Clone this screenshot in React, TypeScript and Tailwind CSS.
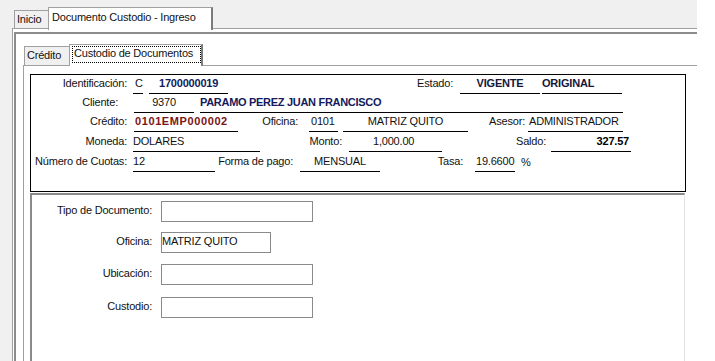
import React from "react";

type P = { className?: string; children?: React.ReactNode };

const L = ({ className = "", children }: P) => (
  <div className={`h-full flex items-end justify-end pb-[4px] pr-[2px] whitespace-nowrap shrink-0 ${className}`}>
    {children}
  </div>
);

const F = ({ className = "", children }: P) => (
  <div className={`h-full flex items-end pb-[3px] border-b border-black whitespace-nowrap shrink-0 ${className}`}>
    {children}
  </div>
);

const navy = "font-bold text-[#141a5c]";

export default function App() {
  return (
    <div className="w-[715px] h-[361px] bg-white overflow-hidden font-['Liberation_Sans',Arial,sans-serif] text-[11px] leading-[13px] tracking-[-0.2px] text-[#111]">
      <div className="w-[697px] h-full bg-[#f0f0f0] flex flex-col">
        {/* top tabs */}
        <div className="h-[28px] flex items-end pl-[14px] relative z-10 shrink-0">
          <div className="h-[18px] w-[34px] border-t border-l border-[#a0a0a0] pl-[2px] pt-[2px] bg-[#f0f0f0]">Inicio</div>
          <div className="h-[23px] w-[165px] -mb-[2px] bg-white border-t border-l border-r-2 border-[#a0a0a0] border-r-[#7c7c7c] pl-[3px] pt-[3px] whitespace-nowrap">
            Documento Custodio - Ingreso
          </div>
        </div>
        {/* outer tab page */}
        <div className="flex-1 ml-[12px] border-t border-l border-[#a0a0a0] bg-white pt-[3px] pl-[1px] flex flex-col">
          <div className="flex-1 border-t-2 border-l-2 border-[#8c8c8c] flex flex-col">
            <div className="mt-[10px] ml-[7px] flex-1 flex flex-col">
              {/* inner tabs */}
              <div className="h-[21px] flex items-end pl-[1px] relative z-10 shrink-0">
                <div className="h-[19px] w-[45px] border-t border-l border-[#a0a0a0] bg-[#f0f0f0] pl-[2px] pt-[2px]">Crédito</div>
                <div className="h-[22px] w-[134px] -mb-[1px] bg-white border-t border-l border-r-2 border-[#a0a0a0] border-r-[#7c7c7c] pl-[2px] pt-[1px]">
                  <div className="w-[129px] h-[17px] border border-dotted border-black pl-[1px] whitespace-nowrap">Custodio de Documentos</div>
                </div>
              </div>
              {/* inner tab page */}
              <div className="flex-1 border-t border-l border-[#a0a0a0] pt-[8px] pl-[6px] flex flex-col">
                {/* info box */}
                <div className="w-[656px] h-[118px] border border-black flex flex-col shrink-0">
                  <div className="h-[19px] flex">
                    <L className="w-[98px]">Identificación:</L>
                    <F className="ml-[4px] w-[10px] pl-[2px]">C</F>
                    <F className={`ml-[6px] w-[79px] pl-[10px] ${navy}`}>1700000019</F>
                    <L className="w-[227px]">Estado:</L>
                    <F className={`ml-[5px] w-[80px] justify-center font-bold text-[#15173a]`}>VIGENTE</F>
                    <F className={`ml-[2px] w-[80px] font-bold text-[#15173a]`}>ORIGINAL</F>
                  </div>
                  <div className="h-[19px] flex">
                    <L className="w-[89px]">Cliente:</L>
                    <F className="ml-[14px] w-[60px] justify-center">9370</F>
                    <F className={`ml-[6px] w-[423px] tracking-[-0.3px] ${navy}`}>PARAMO PEREZ JUAN FRANCISCO</F>
                  </div>
                  <div className="h-[19px] flex">
                    <L className="w-[98px]">Crédito:</L>
                    <F className="ml-[5px] w-[104px] pl-[1px] font-bold text-[#7b1416] tracking-[0.6px]">0101EMP000002</F>
                    <L className="w-[62px]">Oficina:</L>
                    <F className="ml-[9px] w-[29px] pl-[2px]">0101</F>
                    <F className="ml-[5px] w-[125px] justify-center">MATRIZ QUITO</F>
                    <L className="w-[59px] pr-[1px]">Asesor:</L>
                    <F className="ml-[1px] w-[95px] pl-[1px]">ADMINISTRADOR</F>
                  </div>
                  <div className="h-[20px] flex">
                    <L className="w-[98px]">Moneda:</L>
                    <F className="ml-[4px] w-[127px]">DOLARES</F>
                    <L className="w-[84px]">Monto:</L>
                    <F className="ml-[5px] w-[93px] pl-[24px]">1,000.00</F>
                    <L className="w-[106px]">Saldo:</L>
                    <F className="ml-[3px] w-[80px] justify-end pr-[2px] font-bold text-black">327.57</F>
                  </div>
                  <div className="h-[20px] flex">
                    <L className="w-[98px] pr-[1px]">Número de Cuotas:</L>
                    <F className="ml-[4px] w-[82px]">12</F>
                    <L className="w-[80px]">Forma de pago:</L>
                    <F className="ml-[5px] w-[80px] justify-center">MENSUAL</F>
                    <L className="w-[85px]">Tasa:</L>
                    <F className="ml-[10px] w-[40px] pl-[1px]">19.6600</F>
                    <div className="h-full flex items-end pb-[3px] ml-[6px]">%</div>
                  </div>
                </div>
                {/* lower panel */}
                <div className="mt-[1px] w-[655px] flex-1 border-t-2 border-l-2 border-[#8a8a8a] border-r border-r-[#e4e4e4] flex flex-col">
                  <div className="mt-[6px] h-[21px] flex items-center">
                    <div className="w-[123px] text-right pr-[3px] pb-[2px]">Tipo de Documento:</div>
                    <div className="ml-[6px] w-[152px] h-[21px] border border-[#8a8a8a]" />
                  </div>
                  <div className="mt-[10px] h-[21px] flex items-center">
                    <div className="w-[123px] text-right pr-[3px] pb-[2px]">Oficina:</div>
                    <div className="ml-[6px] w-[110px] h-[21px] border border-[#8a8a8a] flex items-center pb-[2px] whitespace-nowrap">MATRIZ QUITO</div>
                  </div>
                  <div className="mt-[11px] h-[21px] flex items-center">
                    <div className="w-[123px] text-right pr-[3px] pb-[2px]">Ubicación:</div>
                    <div className="ml-[6px] w-[152px] h-[21px] border border-[#8a8a8a]" />
                  </div>
                  <div className="mt-[12px] h-[21px] flex items-center">
                    <div className="w-[123px] text-right pr-[3px] pb-[2px]">Custodio:</div>
                    <div className="ml-[6px] w-[152px] h-[21px] border border-[#8a8a8a]" />
                  </div>
                </div>
              </div>
            </div>
          </div>
        </div>
      </div>
    </div>
  );
}
